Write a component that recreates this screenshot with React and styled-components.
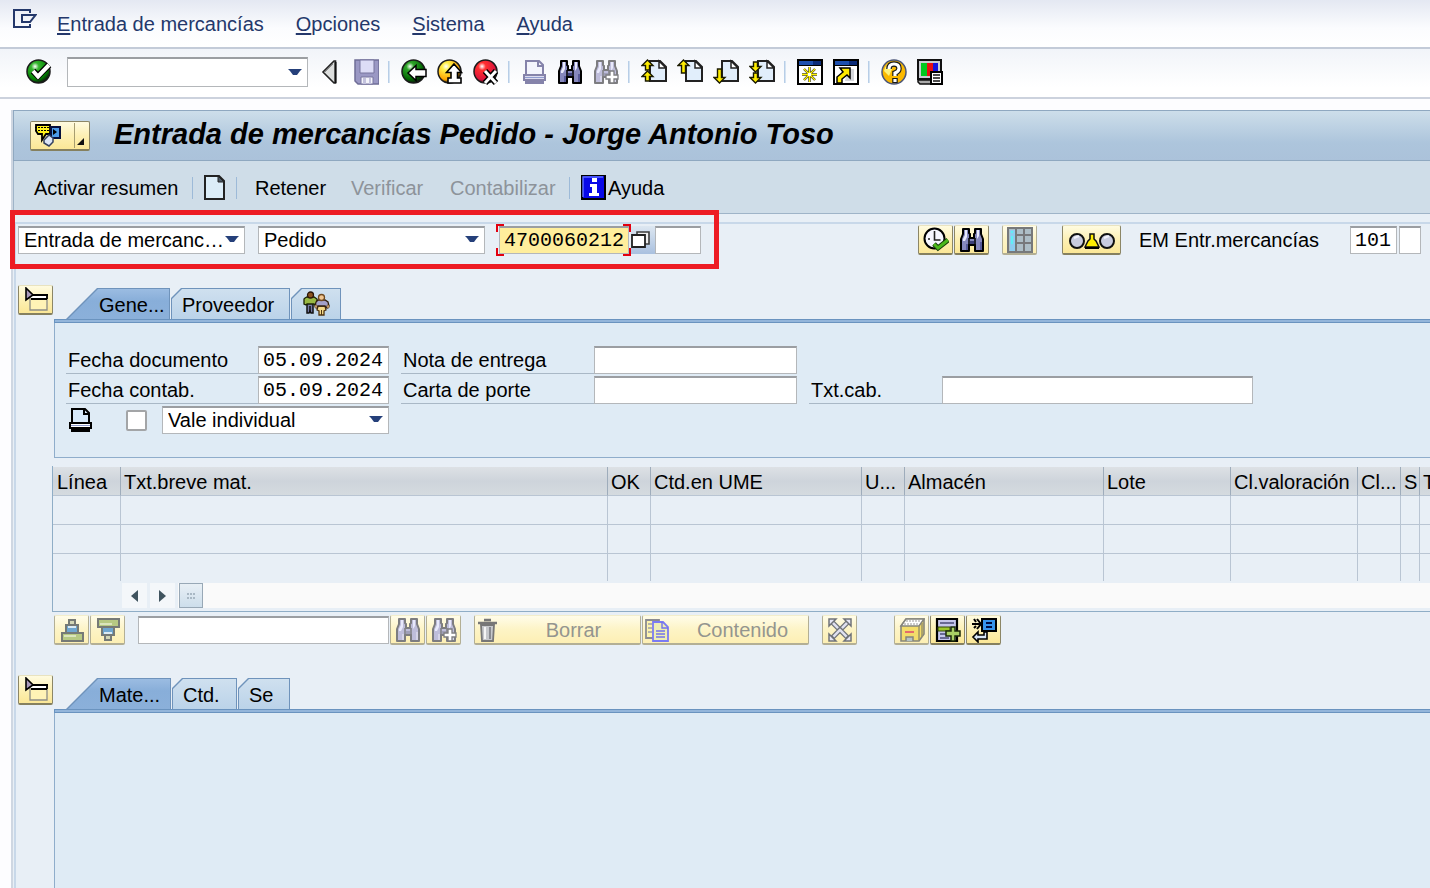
import React from "react";
import styled, { createGlobalStyle, css } from "styled-components";

const GlobalStyle = createGlobalStyle`
  *, *::before, *::after { box-sizing: border-box; }
  html, body { margin: 0; padding: 0; }
  body { background: #fff; }
  body, button, input, select {
    font-family: "Liberation Sans", Arial, sans-serif;
    font-size: 20px;
    line-height: 24px;
    color: #000;
  }
  button { margin: 0; padding: 0; border: 0; background: none; white-space: nowrap; }
  input { margin: 0; }
  svg { display: block; flex: none; }
`;

/* ---------- layout ---------- */

const Page = styled.div`
  min-height: 100vh;
  display: flex;
  flex-direction: column;
  background: #fdfdff;
  overflow: hidden;
`;

const MenuBar = styled.nav`
  display: flex;
  align-items: center;
  gap: 32px;
  height: 49px;
  padding: 0 13px;
  border-bottom: 2px solid #c3cbd8;
  background: linear-gradient(#e4e8f2, #fbfcfe 60%, #fff);
`;

const MenuLogo = styled.span`
  margin-right: -12px;
  padding-bottom: 11px;
`;

const MenuButton = styled.button`
  color: #24386b;
  u { text-underline-offset: 2px; }
`;

const StandardBar = styled.header`
  display: flex;
  align-items: center;
  height: 50px;
  padding: 0 26px 3px;
  border-bottom: 2px solid #ccd2dd;
  background: linear-gradient(#f1f4f9, #fff 80%);
`;

const IconGroup = styled.div`
  display: flex;
  gap: 10px;
  margin-left: ${(p) => p.$space || 0}px;
`;

const IconButton = styled.button`
  width: 26px;
  height: 26px;
  display: grid;
  place-items: center;
`;

const Divider = styled.span`
  width: 2px;
  height: 22px;
  margin: 0 11px 0 9px;
  background: linear-gradient(90deg, #a9c4e2, #e3edf7);
`;

const Frame = styled.main`
  flex: 1;
  display: flex;
  flex-direction: column;
  min-width: 0;
  margin: 11px 0 0 11px;
  border-left: 2px solid #cfd7e2;
`;

const TitleBar = styled.div`
  display: flex;
  align-items: center;
  gap: 24px;
  height: 51px;
  padding: 0 16px;
  border: 1px solid #8fa8c0;
  border-width: 1px 0 1px 1px;
  background: linear-gradient(#cddeea, #adc5dc 65%, #abc2da);
`;

const Title = styled.h1`
  margin: 0;
  padding-bottom: 3px;
  font-size: 29px;
  line-height: 34px;
  font-weight: bold;
  font-style: italic;
  white-space: nowrap;
`;

const ActionBar = styled.div`
  display: flex;
  align-items: center;
  height: 53px;
  padding: 1px 0 0 20px;
  border: 1px solid #9fb4c8;
  border-width: 0 0 1px 1px;
  background: #cfdde8;
`;

const ActionButton = styled.button`
  display: flex;
  align-items: center;
  gap: 2px;
  min-width: ${(p) => p.$width}px;
  margin-left: ${(p) => p.$space || 0}px;
  &:disabled { color: #8d939a; }
`;

const ActionDivider = styled.span`
  width: 1px;
  height: 22px;
  margin: 0 11px;
  background: #9dbad8;
`;

const Workspace = styled.div`
  flex: 1;
  display: flex;
  flex-direction: column;
  min-width: 0;
  padding: 8px 0 0 1px;
  background: #e8eff6;
`;

const Content = styled.div`
  flex: 1;
  display: flex;
  flex-direction: column;
  min-width: 0;
  border: solid #c8d8e9;
  border-width: 2px 0 0 2px;
`;

const ReferenceRow = styled.div`
  position: relative;
  display: flex;
  align-items: center;
  height: 32px;
  padding: 0 9px 0 2px;
`;

const HighlightBox = styled.div`
  position: absolute;
  left: -6px;
  top: -14px;
  width: 709px;
  height: 59px;
  border: 5px solid #ed1c24;
  pointer-events: none;
`;

const RightTools = styled.div`
  display: flex;
  align-items: center;
  margin-left: auto;
`;

const MovementLabel = styled.label`
  width: 211px;
  margin-left: 18px;
  white-space: nowrap;
`;

const Section = styled.section`
  display: grid;
  grid-template-columns: 35px minmax(0, 1fr);
  column-gap: 1px;
  margin-top: ${(p) => p.$space}px;
  padding-left: 2px;
  align-items: start;
  ${(p) => p.$grow && css`flex: 1; align-items: stretch;`}
`;

const Tabbed = styled.div`
  display: flex;
  flex-direction: column;
  padding-top: 3px;
`;

const Tabs = styled.div`
  display: flex;
  gap: 1px;
  padding-left: 12px;
`;

const Tab = styled.button`
  --cut: ${(p) => (p.$active ? 31 : 10)}px;
  position: relative;
  z-index: 0;
  height: 31px;
  width: ${(p) => p.$width}px;
  padding: 3px 0 0 ${(p) => (p.$active ? 33 : 11)}px;
  text-align: left;
  background: #6f93bb;
  clip-path: polygon(var(--cut) 0, 100% 0, 100% 100%, 0 100%, 0 var(--cut));
  &::before {
    content: "";
    position: absolute;
    z-index: -1;
    inset: 1px 1px 0 1px;
    background: ${(p) => (p.$active ? "linear-gradient(#9bbce2, #88aed9 40%, #8bb0da)" : "linear-gradient(#cfe0ef, #bbd3e9)")};
    clip-path: polygon(var(--cut) 0, 100% 0, 100% 100%, 0 100%, 0 var(--cut));
  }
`;

const TabLine = styled.div`
  height: 4px;
  border: 1px solid #6a93bf;
  border-right: 0;
  background: #93b5da;
`;

const Panel = styled.div`
  flex: 1;
  padding: 23px 12px 23px 11px;
  border: solid #8fadcb;
  border-width: 0 0 ${(p) => (p.$open ? 0 : 1)}px 1px;
  background: #dfebf5;
`;

const FieldGrid = styled.div`
  display: grid;
  grid-template-columns: 192px 131px 12px 193px 203px 12px 133px 311px;
  grid-template-rows: 28px 28px 28px;
  row-gap: 2px;
`;

const FieldLabel = styled.label`
  grid-column: ${(p) => p.$column};
  padding: 2px 0 0 2px;
  border-bottom: 1px solid #a9b8c6;
  white-space: nowrap;
`;

const PrintOptions = styled.div`
  grid-column: 1 / 3;
  display: flex;
  align-items: center;
  padding-left: 1px;
`;

/* ---------- controls ---------- */

const TextInput = styled.input`
  width: ${(p) => (p.$width ? p.$width + "px" : "100%")};
  height: 28px;
  margin-left: ${(p) => p.$space || 0}px;
  padding: 0 4px;
  border: 1px solid #b4b7ba;
  border-top: 2px solid #9b9ea2;
  border-radius: 0;
  background: ${(p) => (p.$focused ? "#ffee9c" : "#fff")};
  font-family: "Liberation Mono", monospace;
  outline: none;
`;

const FocusFrame = styled.span`
  --red: linear-gradient(#e3000f, #e3000f);
  display: block;
  padding: 2px 2px 2px 3px;
  background:
    var(--red) 0 0 / 8px 2px, var(--red) 0 0 / 2px 8px,
    var(--red) 100% 0 / 8px 2px, var(--red) 100% 0 / 2px 8px,
    var(--red) 0 100% / 8px 2px, var(--red) 0 100% / 2px 8px,
    var(--red) 100% 100% / 8px 2px, var(--red) 100% 100% / 2px 8px;
  background-repeat: no-repeat;
  margin-left: 11px;
  & > input { display: block; }
`;

const MatchButton = styled.button`
  width: 24px;
  height: 28px;
  display: grid;
  place-items: center start;
  background: linear-gradient(#dde7f1, #a9c0df);
`;

const SelectBox = styled.div`
  position: relative;
  width: ${(p) => p.$width}px;
  margin-left: ${(p) => p.$space || 0}px;
  svg { position: absolute; right: 6px; top: ${(p) => (p.$tall ? 11 : 9)}px; pointer-events: none; }
`;

const SelectField = styled.select`
  display: block;
  appearance: none;
  width: 100%;
  height: ${(p) => (p.$tall ? 30 : 28)}px;
  padding: 0 0 2px 5px;
  border: 1px solid #b4b7ba;
  border-top: 2px solid #9b9ea2;
  border-radius: 0;
  background: #fff;
  outline: none;
`;

const Checkbox = styled.input`
  appearance: none;
  width: 21px;
  height: 21px;
  margin: 0 15px 0 33px;
  border: 2px solid #a3a5a7;
  border-radius: 2px;
  background: #fff;
`;

const GoldButton = styled.button`
  display: flex;
  align-items: center;
  justify-content: ${(p) => (p.$text ? "flex-start" : "center")};
  width: ${(p) => p.$width || 35}px;
  height: 30px;
  margin-left: ${(p) => p.$space || 0}px;
  padding: ${(p) => (p.$text ? "0 2px" : "0")};
  border: 1px solid #8c8666;
  border-top-color: #e9e3c0;
  border-bottom: 2px solid #85805f;
  border-radius: 2px;
  background: linear-gradient(#fffbe0, #fdf0b4 50%, #fbe797);
  span { flex: 1; text-align: center; padding-left: 10px; }
  &:disabled {
    color: #94958f;
    border-color: #f3eecb #b3af95 #b3af95;
    background: linear-gradient(#fffce9, #fdf4c6 50%, #fdefb4);
  }
`;

const MenuGold = styled(GoldButton)`
  position: relative;
  justify-content: flex-start;
  padding-left: 3px;
  border-top-color: #8c8666;
  &::after {
    content: "";
    position: absolute;
    right: 14px;
    top: 1px;
    bottom: 1px;
    border-left: 1px solid #a79d70;
  }
  svg + svg { margin: 13px 0 0 16px; }
`;

/* ---------- item table ---------- */

const TableFrame = styled.div`
  margin: 8px 0 0 36px;
  padding: 1px 0 3px;
  border: solid #8fadc6;
  border-width: 0 0 1px 1px;
`;

const ItemTable = styled.table`
  width: 100%;
  table-layout: fixed;
  border-collapse: separate;
  border-spacing: 0;
  th, td {
    height: 29px;
    padding: 2px 0 0 3px;
    border-right: 1px solid #b9c5d3;
    border-bottom: 1px solid #b9c5d3;
    text-align: left;
    font-weight: normal;
    white-space: nowrap;
    overflow: hidden;
  }
  th {
    border-right-color: #9eacbb;
    background: linear-gradient(#dde1e5, #ced4db 50%, #d5dbdf);
  }
  th:first-child { padding-left: 4px; }
  tr:last-child td { height: 27px; border-bottom: 0; }
  th:last-child, td:last-child { border-right: 0; }
`;

const ScrollRow = styled.div`
  display: flex;
  gap: 3px;
  height: 25px;
  margin: 2px 0 0 69px;
`;

const ScrollButton = styled.button`
  display: grid;
  place-items: center;
  width: 25px;
  background: #f4f7fa;
`;

const ScrollTrack = styled.div`
  flex: 1;
  padding-left: 1px;
  background: #fafafa;
`;

const ScrollThumb = styled.div`
  display: grid;
  place-items: center;
  width: 24px;
  height: 25px;
  border: 1px solid #98a8b6;
  background: linear-gradient(#e8eff5, #cddeeb);
`;

const ItemTools = styled.div`
  display: flex;
  align-items: center;
  gap: 1px;
  margin: 3px 0 0 38px;
`;

/* ---------- drawings ---------- */

const Svg = ({ w = 26, h = 26, children }) => (
  <svg width={w} height={h} viewBox={`0 0 ${w} ${h}`} aria-hidden="true">{children}</svg>
);

const LogoIcon = () => (
  <Svg w={24} h={19}><path d="M17 4V1H1v17h16v-3M9 6h13.500l-5.500 7H9z" fill="none" stroke="#24386b" strokeWidth="2" /></Svg>
);

const Caret = () => (
  <Svg w={14} h={8}><path d="M0 1h14l-2 2-3 4H5L2 3z" fill="#25407a" /></Svg>
);

const Ball = ({ from, to, children }) => (
  <Svg>
    <defs>
      <radialGradient id={"ball" + to} cx="35%" cy="28%" r="75%">
        <stop offset="0" stopColor="#fff" /><stop offset=".22" stopColor={from} /><stop offset=".75" stopColor={to} /><stop offset="1" stopColor="#111" />
      </radialGradient>
    </defs>
    <circle cx="12.500" cy="12.500" r="11.500" fill={`url(#ball${to})`} stroke="#1b1b1b" strokeWidth="1.500" />
    {children}
  </Svg>
);

const EnterIcon = () => (
  <Ball from="#35b52e" to="green"><path d="M7 12l5 5L23 6" fill="none" stroke="#000" strokeWidth="6.500" /><path d="M7 12l5 5.500L23 6" fill="none" stroke="#fff" strokeWidth="4" /></Ball>
);
const GoBackIcon = () => (
  <Ball from="#2fa52a" to="darkgreen"><path d="M7 14l8-7.500v4h10v7H15v4z" fill="#fff" stroke="#000" strokeWidth="1.500" /></Ball>
);
const ExitIcon = () => (
  <Ball from="#fff04a" to="orange"><path d="M17 5l7.500 8.500h-4V19H24v5H11v-5h3v-5.500H9.500z" fill="#fff" stroke="#000" strokeWidth="1.600" /></Ball>
);
const CancelIcon = () => (
  <Ball from="#ff3030" to="crimson"><path d="M12 12l11 12M23 12L12 24" stroke="#000" strokeWidth="6" /><path d="M12 12l11 12M23 12L12 24" stroke="#fff" strokeWidth="3" /></Ball>
);

const TriangleIcon = () => (
  <Svg><path d="M18.500 2v22h-1.500L6 13 17 2z" fill="#dcdedd" stroke="#222" strokeWidth="1.600" /><path d="M18.500 3v21" stroke="#111" strokeWidth="2" /><path d="M8 13l8-8" stroke="#888" /></Svg>
);

const SaveIcon = () => (
  <Svg>
    <path d="M2 1h24v24H5l-3-3z" fill="#9a98c4" stroke="#6f6d96" strokeWidth="1.500" />
    <path d="M7 1h14v13H7z" fill="#dcdcf6" stroke="#77759e" /><path d="M8 18h12v7H8z" fill="#f3f3fb" stroke="#77759e" /><path d="M10 19h3v6h-3zM16 19h2v6h-2z" fill="#c3c2dd" />
  </Svg>
);

const PrinterIcon = ({ dark }) => {
  const line = dark ? "#000" : "#8583aa";
  return (
    <Svg>
      <path d="M5 16V2h13l4 4v10" fill={dark ? "#d7e9fa" : "#f3f4fc"} stroke={line} strokeWidth="2" />
      <path d="M17 2v5h5" fill="none" stroke={line} strokeWidth="2" />
      <path d="M3 16h21v5H3z" fill={dark ? "#fff" : "#dddcef"} stroke={line} strokeWidth="2" />
      <path d="M4 23.500h19" stroke={line} strokeWidth="3" />
      <path d="M4 18.500h19" stroke="#8f9cd0" />
    </Svg>
  );
};

const BinocularsIcon = ({ pale, plus }) => {
  const line = pale ? "#7d7d80" : "#000";
  const body = pale ? "#bebdda" : "#8688bd";
  return (
    <Svg>
      <path d="M4 2h6v4l1 1v4h4V7l1-1V2h6v5l2 5v12h-8v-6h-6v6H2V12l2-5z" fill={body} stroke={line} strokeWidth="2" strokeLinejoin="round" />
      <path d="M6 3h2v7l-2 4H4v-2l2-4zM18 3h2v6l-2 3z" fill="#e8e9fb" />
      <path d="M10 11v7M16 11v7" stroke={line} strokeWidth="1.500" />
      <path d="M11 14h4v3h-4z" fill={pale ? "#9f9fb8" : "#3c3f7a"} />
      <path d="M8 17v6M22 15v8" stroke={pale ? "#d5d4e8" : "#575a99"} strokeWidth="2" />
      {plus && <path d="M17 12h4v4h4v4h-4v4h-4v-4h-4v-4h4z" fill="#fff" stroke={line} strokeWidth="1.300" />}
    </Svg>
  );
};

const SmallArrow = ({ y, len, down }) => (
  <path
    d={`M6.500 0l5.500 5.500H8.500v${len - 5.5}h-4V5.500H1z`}
    transform={down ? `translate(0 ${y + len}) scale(1 -1)` : `translate(0 ${y})`}
    fill="#ffee00" stroke="#1a1a00" strokeWidth="1.400"
  />
);

const PageArrowsIcon = ({ arrows }) => (
  <Svg>
    <path d="M9 2h10l6 6v14H9z" fill="#e1eefb" stroke="#222" strokeWidth="2" />
    <path d="M18 2v7h7z" fill="#fff" stroke="#222" strokeWidth="1.500" />
    {arrows.map((a, i) => <SmallArrow key={i} {...a} />)}
  </Svg>
);

const WindowBase = ({ children }) => (
  <Svg>
    <path d="M1 1h24v24H1z" fill="#fff" stroke="#000" strokeWidth="2" />
    <path d="M2 2h22v4H2z" fill="#1d4fae" /><path d="M16 2h8v4h-8z" fill="#0b2b78" /><path d="M1 6.500h24" stroke="#000" />
    {children}
  </Svg>
);
const NewSessionIcon = () => (
  <WindowBase>
    <path d="M12.500 8v15M5 15.500h15M7 10l11 11M18 10L7 21" stroke="#222" strokeWidth="2.400" />
    <path d="M12.500 8v15M5 15.500h15M7 10l11 11M18 10L7 21" stroke="#fff200" strokeWidth="1.400" />
    <path d="M11 14h3v3h-3z" fill="#fff" />
  </WindowBase>
);
const ShortcutIcon = () => (
  <WindowBase>
    <path d="M15 10h6v12h-9z" fill="#d5d7dc" />
    <path d="M7 9h10v10l-3-3-5 4v4H4v-6l6-5z" fill="#ffe900" stroke="#000" strokeWidth="1.500" />
  </WindowBase>
);

const HelpIcon = () => (
  <Svg>
    <circle cx="13" cy="13" r="12" fill="#fbb900" stroke="#4a5578" strokeWidth="1.500" />
    <path d="M3 12A10 10 0 0 1 14 3L8 17z" fill="#fff27a" />
    <path d="M8 10q0-5 5-5t5 4.500q0 3-4 4.500v3M14 19v5" fill="none" stroke="#1a1a1a" strokeWidth="5.500" />
    <path d="M8 10q0-5 5-5t5 4.500q0 3-4 4.500v3M14 20v3" fill="none" stroke="#fff" strokeWidth="3.200" />
  </Svg>
);

const LayoutIcon = () => (
  <Svg>
    <path d="M1 1h23v19H1z" fill="#c9ccd2" stroke="#111" strokeWidth="2" />
    <path d="M4 4h6v13H4z" fill="#00c81e" /><path d="M10 4h6v13h-6z" fill="#e80e12" /><path d="M16 4h5v13h-5z" fill="#1512df" />
    <path d="M1 21h16v4H3l-2-2z" fill="#aaa" stroke="#111" strokeWidth="1.500" />
    <path d="M14 13h11v12H14z" fill="#fff" stroke="#000" strokeWidth="2" /><path d="M16 16h7M16 19h7M16 22h7" stroke="#111" strokeWidth="1.300" />
  </Svg>
);

const ServicesIcon = () => (
  <Svg w={27} h={24}>
    <path d="M2 2h14v9h-4l-4 6V11H4L2 8z" fill="#fff21c" stroke="#000" strokeWidth="1.800" />
    <path d="M1 4.500h15M1 7.500h14" stroke="#000" strokeWidth="1" strokeDasharray="2 1" />
    <path d="M17 4h9v11h-9z" fill="#4c9be8" stroke="#06103c" strokeWidth="2" /><path d="M19 6l4 3-4 3z" fill="#000" />
    <path d="M10 17l5-5 4 3v4l-4 4-5-3z" fill="#dce5f7" stroke="#33405f" strokeWidth="1.500" />
  </Svg>
);

const CornerIcon = () => <Svg w={7} h={7}><path d="M7 0v7H0z" fill="#111" /></Svg>;

const NewPageIcon = () => (
  <Svg w={21} h={26}><path d="M1 1h14l5 5v18H1z" fill="#dcedf8" stroke="#222" strokeWidth="2" /><path d="M14 1v6h6z" fill="#4e5a66" stroke="#222" /></Svg>
);

const InfoIcon = () => (
  <Svg w={25} h={25}>
    <path d="M1 0h23v24H1z" fill="#0909e8" stroke="#000" strokeWidth="2" /><path d="M2 22V2h20" fill="none" stroke="#5b6cff" strokeWidth="1.500" />
    <path d="M11 3h5v4h-5zM9 9h7v9h2v3H8v-3h3v-6H9z" fill="#fff" />
  </Svg>
);

const MatchIcon = () => (
  <Svg w={20} h={18}><path d="M6 1h12v12H6z" fill="#eee" stroke="#3c3c3c" strokeWidth="1.600" /><path d="M1 4h13v12H1z" fill="#fff" stroke="#222" strokeWidth="1.800" /></Svg>
);

const ExecuteIcon = () => (
  <Svg>
    <circle cx="11.500" cy="11.500" r="10" fill="#f6f6ff" stroke="#000" strokeWidth="2" />
    <path d="M11.500 4v9h6M5 12h2M11.500 17v2" fill="none" stroke="#222" strokeWidth="1.600" />
    <path d="M11 17l4 4 10-8" fill="none" stroke="#163c0a" strokeWidth="5" /><path d="M11 17l4 4 10-8" fill="none" stroke="#4cb91d" strokeWidth="3" />
  </Svg>
);

const GridIcon = () => (
  <Svg>
    <path d="M1 1h24v24H1z" fill="#adbec6" stroke="#77797b" strokeWidth="2" />
    <path d="M3 3h5v21H3z" fill="#8ccdf0" /><path d="M4 4h2v2H4zM4 9h2v8H4z" fill="#5ff0f5" />
    <path d="M9 1v24M17 1v24M9 8h16M9 16h16" stroke="#77797b" strokeWidth="2" />
  </Svg>
);

const DetectIcon = () => (
  <Svg w={46} h={24}>
    <path d="M16 19l3-6 2-2V6h4v5l2 2 3 6z" fill="#ffee00" stroke="#111" strokeWidth="1.500" />
    <circle cx="8" cy="13" r="7" fill="#c9cce0" stroke="#111" strokeWidth="2" /><circle cx="38" cy="13" r="7" fill="#c9cce0" stroke="#111" strokeWidth="2" />
    <path d="M5 10l5-2M35 10l5-2" stroke="#f2f2fa" strokeWidth="2" />
    <path d="M16 20h14" stroke="#000" strokeWidth="2" />
  </Svg>
);

const ExpandIcon = () => (
  <Svg>
    <path d="M7 9h17v14H7z" fill="#fff3b6" stroke="#8d8d86" strokeWidth="1.300" />
    <path d="M8 8h16v4H8z" fill="#fff" /><path d="M4 8h21M8 12h16M24 8v4" stroke="#000" strokeWidth="1.800" />
    <path d="M3 1l7 7-3 2-4 3z" fill="#aa9abb" stroke="#000" strokeWidth="1.600" />
  </Svg>
);

const PeopleIcon = () => (
  <Svg w={28} h={28}>
    <path d="M5 12h6v10H9l-1-2-1 2H5z" fill="#777ba5" stroke="#111" strokeWidth="1.500" /><path d="M8 15v6" stroke="#111" strokeWidth="1.500" />
    <path d="M3 7l2-1h7l3 2v5l-2 1-1-1H5l-1 1-2-1V8z" fill="#99b944" stroke="#1b2205" strokeWidth="1.300" />
    <circle cx="8.500" cy="4" r="3" fill="#8b531f" stroke="#2b1608" strokeWidth="1.300" />
    <path d="M16 15h7l1 4-2 1v4h-5v-4l-2-1z" fill="#f3d987" stroke="#503310" strokeWidth="1.300" /><path d="M19.500 19v5" stroke="#503310" />
    <path d="M16 9h7l3 2 1 4-2 2-2-2h-7l-1 2-2-2 1-4z" fill="#a3a1c9" stroke="#32200e" strokeWidth="1.300" />
    <circle cx="19.500" cy="6.500" r="3" fill="#f2c691" stroke="#704a20" strokeWidth="1.300" />
    <path d="M25 14h2v3h-2zM13 14h2v3h-2z" fill="#f2c691" stroke="#503310" strokeWidth=".6" />
  </Svg>
);

const StackIcon = ({ flip }) => (
  <Svg>
    <g transform={flip ? "translate(0 26) scale(1 -1)" : undefined} stroke="#767a76" strokeWidth="2">
      <path d="M10 3h6v7h-6z" fill="#d3d6b6" /><path d="M7 8h12v8H7z" fill="#6fa6d0" /><path d="M3 16h21v8H3z" fill="#b7c983" />
      <path d="M5 19h12" stroke="#dbe5bd" /><path d="M9 10h8" stroke="#dcebf3" />
    </g>
  </Svg>
);

const TrashIcon = () => (
  <Svg w={22} h={24}>
    <path d="M4 7h13l-1 16H5z" fill="#c6c8cc" stroke="#777" strokeWidth="1.800" /><path d="M1 5h19M7 2h7" stroke="#777" strokeWidth="2.500" />
    <path d="M8 9v12" stroke="#f5f5f5" strokeWidth="2" /><path d="M13 9v12" stroke="#888a90" strokeWidth="2" />
  </Svg>
);

const CopyIcon = () => (
  <Svg w={24} h={24}>
    <path d="M1 2h13v18H1z" fill="#fdf3ad" stroke="#8b8b91" strokeWidth="1.800" /><path d="M3 6h4M3 10h4M3 14h4" stroke="#9aa0aa" strokeWidth="1.500" />
    <path d="M8 4h10l5 5v14H8z" fill="#eeeeb4" stroke="#7b7bf3" strokeWidth="1.800" /><path d="M17 4v6h6M11 13h9M11 16h9M11 19h9" fill="none" stroke="#7373ea" strokeWidth="1.400" />
  </Svg>
);

const SpreadIcon = () => (
  <Svg>
    <path d="M4 4l18 18M22 4L4 22" stroke="#707378" strokeWidth="5" /><path d="M4 4l18 18M22 4L4 22" stroke="#dfe0f0" strokeWidth="2.500" strokeDasharray="10 2" />
    <path d="M2 9V2h7zM17 2h7v7zM2 17v7h7zM24 17v7h-7z" fill="#e7e7f6" stroke="#707378" strokeWidth="1.500" />
  </Svg>
);

const BoxIcon = () => (
  <Svg>
    <path d="M2 9l5-7h18v15l-5 7H2z" fill="#f3dd6a" stroke="#85857c" strokeWidth="1.600" /><path d="M2 9l5-7h18l-5 7z" fill="#fff" stroke="#85857c" strokeWidth="1.500" />
    <path d="M5 7h15M7 4h15" stroke="#999" strokeDasharray="2 1" /><path d="M20 9v14M23 6v14" stroke="#9a9267" strokeWidth="1.500" />
    <path d="M6 15h9" stroke="#e56c6c" strokeWidth="2" /><path d="M7 24v-4h7v4" fill="#b5c4c5" stroke="#85857c" strokeWidth="1.500" />
  </Svg>
);

const AddLinesIcon = () => (
  <Svg>
    <path d="M2 2h20v22H2z" fill="#c6c6ec" stroke="#000" strokeWidth="2.200" /><path d="M5 6h14M5 17h9M5 21h9" stroke="#4b4b78" strokeWidth="1.500" />
    <path d="M3 10h12v4H3z" fill="#9dc62c" stroke="#33450b" /><path d="M16 10h4v4h5v5h-5v5h-4v-5h-5v-5h5z" fill="#a9d164" stroke="#1c2a08" strokeWidth="1.500" />
  </Svg>
);

const TransferIcon = () => (
  <Svg>
    <path d="M11 2h14v12H11z" fill="#3794ec" stroke="#000" strokeWidth="2" /><path d="M15 6h6M15 10h6" stroke="#000b3f" strokeWidth="2" />
    <path d="M1 7h9M6 2l4 5-4 5M3 2l2 3M3 11l2-2" fill="none" stroke="#000" strokeWidth="2" />
    <path d="M13 15v3H7v-3l-5 5 5 5v-3h9v-7z" fill="#d8e6f6" stroke="#000" strokeWidth="1.600" />
  </Svg>
);

const ArrowGlyph = ({ right }) => <Svg w={7} h={12}><path d={right ? "M0 0l7 6-7 6z" : "M7 0L0 6l7 6z"} fill="#40545f" /></Svg>;

const GripIcon = () => (
  <Svg w={10} h={6}><path d="M1 0h2v2H1zM4 0h2v2H4zM7 0h2v2H7zM1 4h2v2H1zM4 4h2v2H4zM7 4h2v2H7z" fill="#a9b8c4" /></Svg>
);

/* ---------- page ---------- */

const menus = ["Entrada de mercancías", "Opciones", "Sistema", "Ayuda"];

const toolGroups = [
  [["Atrás", <GoBackIcon />], ["Finalizar", <ExitIcon />], ["Cancelar", <CancelIcon />]],
  [["Imprimir", <PrinterIcon />], ["Buscar", <BinocularsIcon />], ["Continuar búsqueda", <BinocularsIcon pale plus />]],
  [
    ["Primera página", <PageArrowsIcon arrows={[{ y: 1, len: 10 }, { y: 12, len: 10 }]} />],
    ["Página anterior", <PageArrowsIcon arrows={[{ y: 1, len: 13 }]} />],
    ["Página siguiente", <PageArrowsIcon arrows={[{ y: 10, len: 14, down: true }]} />],
    ["Última página", <PageArrowsIcon arrows={[{ y: 3, len: 10, down: true }, { y: 14, len: 10, down: true }]} />],
  ],
  [["Crear modo", <NewSessionIcon />], ["Crear acceso directo", <ShortcutIcon />]],
  [["Ayuda", <HelpIcon />], ["Ajustar disposición local", <LayoutIcon />]],
];

const columns = [
  ["Línea", 68], ["Txt.breve mat.", 487], ["OK", 43], ["Ctd.en UME", 211], ["U...", 43], ["Almacén", 199],
  ["Lote", 127], ["Cl.valoración", 127], ["Cl...", 43], ["S", 19], ["T", null],
];

const Select = ({ width, space, tall, label, children }) => (
  <SelectBox $width={width} $space={space} $tall={tall}>
    <SelectField $tall={tall} aria-label={label}>{children}</SelectField>
    <Caret />
  </SelectBox>
);

const TabRow = ({ tabs }) => (
  <>
    <Tabs role="tablist">
      {tabs.map(([label, width, content], i) => (
        <Tab key={label} role="tab" aria-label={label} aria-selected={i === 0} $active={i === 0} $width={width}>{content || label}</Tab>
      ))}
    </Tabs>
    <TabLine />
  </>
);

export default function App() {
  return (
    <Page>
      <GlobalStyle />
      <MenuBar>
        <MenuLogo><LogoIcon /></MenuLogo>
        {menus.map((m) => <MenuButton key={m}><u>{m[0]}</u>{m.slice(1)}</MenuButton>)}
      </MenuBar>

      <StandardBar>
        <IconButton aria-label="Continuar"><EnterIcon /></IconButton>
        <Select width={241} space={15} tall label="Comando"><option></option></Select>
        <IconGroup $space={9}>
          <IconButton aria-label="Ocultar campo de comandos"><TriangleIcon /></IconButton>
          <IconButton aria-label="Grabar"><SaveIcon /></IconButton>
        </IconGroup>
        {toolGroups.map((group, i) => (
          <React.Fragment key={i}>
            <Divider />
            <IconGroup>
              {group.map(([label, icon]) => <IconButton key={label} aria-label={label}>{icon}</IconButton>)}
            </IconGroup>
          </React.Fragment>
        ))}
      </StandardBar>

      <Frame>
        <TitleBar>
          <MenuGold $width={60} aria-label="Servicios para objeto"><ServicesIcon /><CornerIcon /></MenuGold>
          <Title>Entrada de mercancías Pedido - Jorge Antonio Toso</Title>
        </TitleBar>
        <ActionBar>
          <ActionButton $width={147}>Activar resumen</ActionButton>
          <ActionDivider />
          <ActionButton $width={21} aria-label="Crear"><NewPageIcon /></ActionButton>
          <ActionDivider />
          <ActionButton $width={96} $space={7}>Retener</ActionButton>
          <ActionButton $width={99} disabled>Verificar</ActionButton>
          <ActionButton $width={108} disabled>Contabilizar</ActionButton>
          <ActionDivider />
          <ActionButton $width={80}><InfoIcon />Ayuda</ActionButton>
        </ActionBar>

        <Workspace>
          <Content>
            <ReferenceRow>
              <Select width={227} label="Operación"><option>Entrada de mercanc…</option></Select>
              <Select width={227} space={13} label="Documento de referencia"><option>Pedido</option></Select>
              <FocusFrame><TextInput $width={130} $focused aria-label="Pedido" defaultValue="4700060212" /></FocusFrame>
              <MatchButton aria-label="Ayuda para entradas"><MatchIcon /></MatchButton>
              <TextInput $width={46} aria-label="Posición" />
              <RightTools>
                <GoldButton aria-label="Ejecutar"><ExecuteIcon /></GoldButton>
                <GoldButton $space={1} aria-label="Buscar pedido"><BinocularsIcon /></GoldButton>
                <GoldButton $space={13} disabled aria-label="Disposición"><GridIcon /></GoldButton>
                <GoldButton $space={25} $width={59} aria-label="Propuestas"><DetectIcon /></GoldButton>
                <MovementLabel htmlFor="movement">EM Entr.mercancías</MovementLabel>
                <TextInput id="movement" $width={47} defaultValue="101" />
                <TextInput $width={22} $space={2} aria-label="Stock especial" />
              </RightTools>
              <HighlightBox />
            </ReferenceRow>

            <Section $space={29}>
              <GoldButton aria-label="Cerrar cabecera"><ExpandIcon /></GoldButton>
              <Tabbed>
                <TabRow tabs={[["Gene...", 104], ["Proveedor", 119], ["Interlocutor", 50, <PeopleIcon />]]} />
                <Panel>
                  <FieldGrid>
                    <FieldLabel $column={1} htmlFor="docDate">Fecha documento</FieldLabel>
                    <TextInput id="docDate" defaultValue="05.09.2024" />
                    <FieldLabel $column={4} htmlFor="note">Nota de entrega</FieldLabel>
                    <TextInput id="note" />
                    <FieldLabel $column={1} htmlFor="postDate">Fecha contab.</FieldLabel>
                    <TextInput id="postDate" defaultValue="05.09.2024" />
                    <FieldLabel $column={4} htmlFor="waybill">Carta de porte</FieldLabel>
                    <TextInput id="waybill" />
                    <FieldLabel $column={7} htmlFor="headText">Txt.cab.</FieldLabel>
                    <TextInput id="headText" />
                    <PrintOptions>
                      <PrinterIcon dark />
                      <Checkbox type="checkbox" aria-label="Imprimir vale" />
                      <Select width={227} label="Tipo de vale"><option>Vale individual</option></Select>
                    </PrintOptions>
                  </FieldGrid>
                </Panel>
              </Tabbed>
            </Section>

            <TableFrame>
              <ItemTable>
                <colgroup>{columns.map(([name, width]) => <col key={name} width={width || undefined} />)}</colgroup>
                <thead><tr>{columns.map(([name]) => <th key={name} scope="col">{name}</th>)}</tr></thead>
                <tbody>{[0, 1, 2].map((r) => <tr key={r}>{columns.map(([name]) => <td key={name} />)}</tr>)}</tbody>
              </ItemTable>
              <ScrollRow>
                <ScrollButton aria-label="Desplazar a la izquierda"><ArrowGlyph /></ScrollButton>
                <ScrollButton aria-label="Desplazar a la derecha"><ArrowGlyph right /></ScrollButton>
                <ScrollTrack><ScrollThumb><GripIcon /></ScrollThumb></ScrollTrack>
              </ScrollRow>
            </TableFrame>

            <ItemTools>
              <GoldButton disabled aria-label="Orden ascendente"><StackIcon /></GoldButton>
              <GoldButton disabled aria-label="Orden descendente"><StackIcon flip /></GoldButton>
              <TextInput $width={251} $space={12} aria-label="Buscar posición" />
              <GoldButton disabled aria-label="Buscar"><BinocularsIcon pale /></GoldButton>
              <GoldButton disabled aria-label="Continuar búsqueda"><BinocularsIcon pale plus /></GoldButton>
              <GoldButton $text $width={167} $space={12} disabled><TrashIcon /><span>Borrar</span></GoldButton>
              <GoldButton $text $width={167} disabled><CopyIcon /><span>Contenido</span></GoldButton>
              <GoldButton $space={12} disabled aria-label="Distribuir cantidad"><SpreadIcon /></GoldButton>
              <GoldButton $space={36} disabled aria-label="Clasificación"><BoxIcon /></GoldButton>
              <GoldButton aria-label="Añadir línea"><AddLinesIcon /></GoldButton>
              <GoldButton aria-label="Transferir datos"><TransferIcon /></GoldButton>
            </ItemTools>

            <Section $space={30} $grow>
              <GoldButton aria-label="Cerrar detalle"><ExpandIcon /></GoldButton>
              <Tabbed>
                <TabRow tabs={[["Mate...", 105], ["Ctd.", 65], ["Se", 52]]} />
                <Panel $open />
              </Tabbed>
            </Section>
          </Content>
        </Workspace>
      </Frame>
    </Page>
  );
}
